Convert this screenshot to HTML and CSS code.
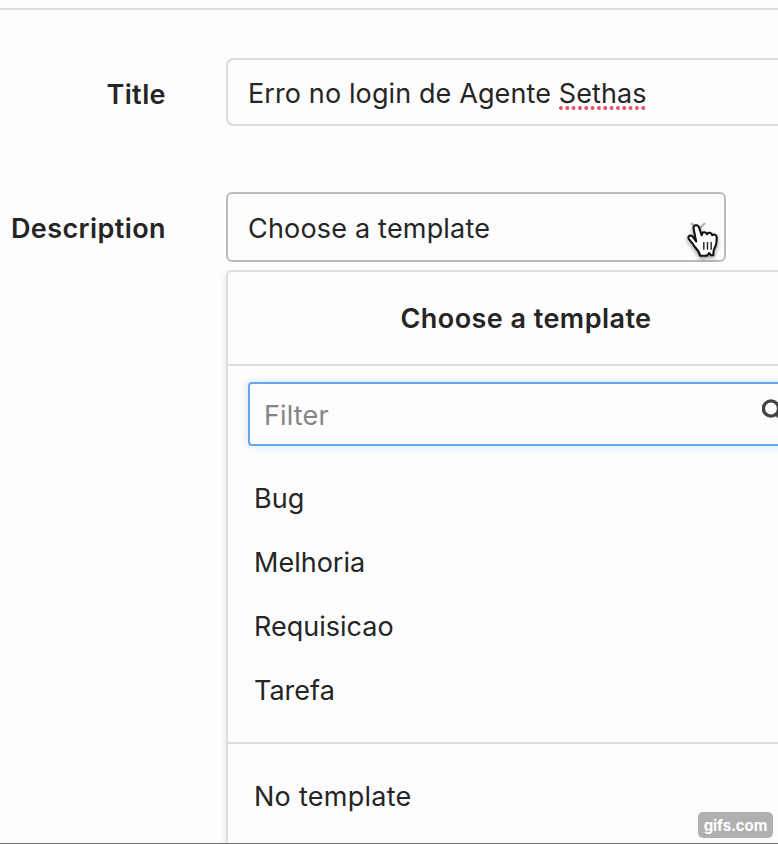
FILE: index.html
```
<!DOCTYPE html>
<html lang="en">
<head>
<meta charset="utf-8">
<title>New issue</title>
<link rel="stylesheet" href="styles.css">
</head>
<body>
<main class="page">
  <div class="row title-row">
    <label class="label">Title</label>
    <div class="input">Erro no login de Agente <span class="misspelled">Sethas</span></div>
  </div>
  <div class="row description-row">
    <label class="label">Description</label>
    <div class="template-picker">
      <div class="select">
        <span>Choose a template</span>
        <svg class="chevron" width="16" height="10" viewBox="0 0 16 10"><path d="M1 1l7 7 7-7" fill="none" stroke="#b5b5b5" stroke-width="2.4"/></svg>
        <svg class="pointer" width="46" height="48" viewBox="0 0 132 144" preserveAspectRatio="none">
          <path d="M32 76L25 40C22 26 37 23 41 36L48 58C49 46 60 46 63 55C66 47 76 49 78 58C83 52 92 57 91 66C91 80 89 90 84 98C81 104 82 110 81 118H75L69 111L63 119H43C42 107 34 101 27 91C22 80 15 75 11 69C6 59 17 55 24 64L32 76Z" fill="#fff" stroke="#111" stroke-width="6" stroke-linejoin="round"/>
          <path d="M54 78V101M64.5 78V101M75 78V101" stroke="#222" stroke-width="4"/>
        </svg>
      </div>
      <div class="dropdown">
        <div class="dropdown-title">Choose a template</div>
        <div class="filter">
          <span>Filter</span>
          <svg class="search" width="26" height="28" viewBox="0 0 26 28"><circle cx="9" cy="9.5" r="7.6" fill="none" stroke="#444" stroke-width="3.4"/><path d="M14.5 15l9 9" stroke="#444" stroke-width="4"/></svg>
        </div>
        <ul class="options">
          <li>Bug</li>
          <li>Melhoria</li>
          <li>Requisicao</li>
          <li>Tarefa</li>
        </ul>
        <div class="dropdown-footer">No template</div>
      </div>
    </div>
  </div>
  <div class="watermark">gifs.com</div>
</main>
</body>
</html>
```
FILE: styles.css
```
* { box-sizing: border-box; }
body {
  margin: 0;
  background: #fdfdfd;
  color: #252525;
  font: 27px/32px Inter, "Liberation Sans", sans-serif;
}
.page {
  position: relative;
  width: 778px;
  height: 844px;
  padding-top: 8px;
  overflow: hidden;
  border-bottom: 1px solid #707070;
}
.page::before {
  content: "";
  display: block;
  height: 2px;
  background: #dedede;
}
.row {
  display: grid;
  grid-template-columns: 166px 600px;
  column-gap: 60px;
  align-items: start;
}
.title-row { margin-top: 48px; }
.description-row { margin-top: 66px; }
.label {
  padding-top: 21px;
  text-align: right;
  font-weight: 600;
  letter-spacing: .42px;
  white-space: nowrap;
}
.input {
  height: 68px;
  padding: 18px 20px;
  border: 2px solid #dcdcdc;
  border-radius: 8px;
  letter-spacing: .11px;
}
.misspelled {
  background: radial-gradient(circle at 2px 2px, #e8556f 1.7px, transparent 2.2px) 0 100% / 6.33px 4px repeat-x;
}
.select {
  position: relative;
  display: flex;
  justify-content: space-between;
  width: 500px;
  height: 70px;
  padding: 19px 18px 19px 20px;
  border: 2px solid #bababa;
  border-radius: 6px;
  letter-spacing: .19px;
}
.chevron { margin-top: 9px; }
.pointer {
  position: absolute;
  left: 457px;
  top: 22px;
  filter: drop-shadow(0 2px 2px rgba(0, 0, 0, .4));
}
.dropdown {
  width: 600px;
  height: 620px;
  margin-top: 8px;
  border: 2px solid #dedede;
  border-radius: 6px;
  background: #fdfdfd;
  box-shadow: 0 4px 8px rgba(0, 0, 0, .1);
}
.dropdown-title {
  height: 94px;
  padding-top: 31px;
  border-bottom: 2px solid #dcdcdc;
  text-align: center;
  font-weight: 600;
  letter-spacing: .45px;
}
.filter {
  display: flex;
  justify-content: space-between;
  height: 64px;
  margin: 16px 20px 0;
  padding: 16px 14px;
  border: 2px solid #67a5e4;
  border-radius: 4px;
  box-shadow: 0 0 8px rgba(90, 170, 240, .28);
  color: #858585;
  letter-spacing: .15px;
}
.search { margin-top: -1px; }
.options {
  margin: 20px 0 0;
  padding: 0;
  list-style: none;
}
.options li { height: 64px; padding: 17px 26px; }
.dropdown-footer {
  margin-top: 20px;
  padding: 37px 26px;
  border-top: 2px solid #dcdcdc;
  letter-spacing: .27px;
}
.watermark {
  position: absolute;
  left: 698px;
  top: 812px;
  width: 75px;
  height: 26px;
  border-radius: 5px;
  background: #b0b0b0;
  color: #fff;
  text-align: center;
  font: 700 15px/27px Inter, sans-serif;
  letter-spacing: -.1px;
}
```
